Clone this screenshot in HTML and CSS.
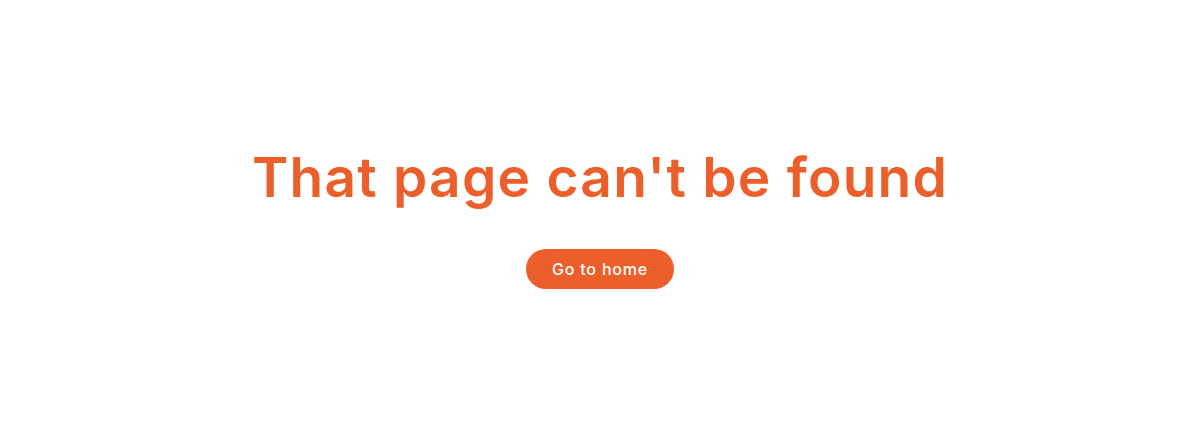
FILE: index.html
```html
<!DOCTYPE html>
<html lang="en">
<head>
<meta charset="utf-8">
<title>Page not found</title>
<link rel="stylesheet" href="styles.css">
</head>
<body>
<main class="notfound">
  <h1 class="notfound__title">That page can't be found</h1>
  <a class="notfound__button" href="#">Go to home</a>
</main>
</body>
</html>
```

FILE: styles.css
```css
html, body {
  margin: 0;
  padding: 0;
  background: #ffffff;
}
body {
  font-family: "Inter", "Open Sans", sans-serif;
}
.notfound {
  height: 100vh;
  display: flex;
  flex-direction: column;
  align-items: center;
  justify-content: center;
  padding-bottom: 8px;
  box-sizing: border-box;
}
.notfound__title {
  margin: 0;
  font-size: 55px;
  font-weight: 600;
  line-height: 1.2;
  letter-spacing: 1.25px;
  color: #ec5e2a;
}
.notfound__button {
  margin-top: 39px;
  display: inline-flex;
  align-items: center;
  justify-content: center;
  width: 148px;
  height: 40px;
  border-radius: 20px;
  background: #ec5e2a;
  color: #ffffff;
  font-size: 16px;
  font-weight: 500;
  letter-spacing: 0.8px;
  text-decoration: none;
}
```
